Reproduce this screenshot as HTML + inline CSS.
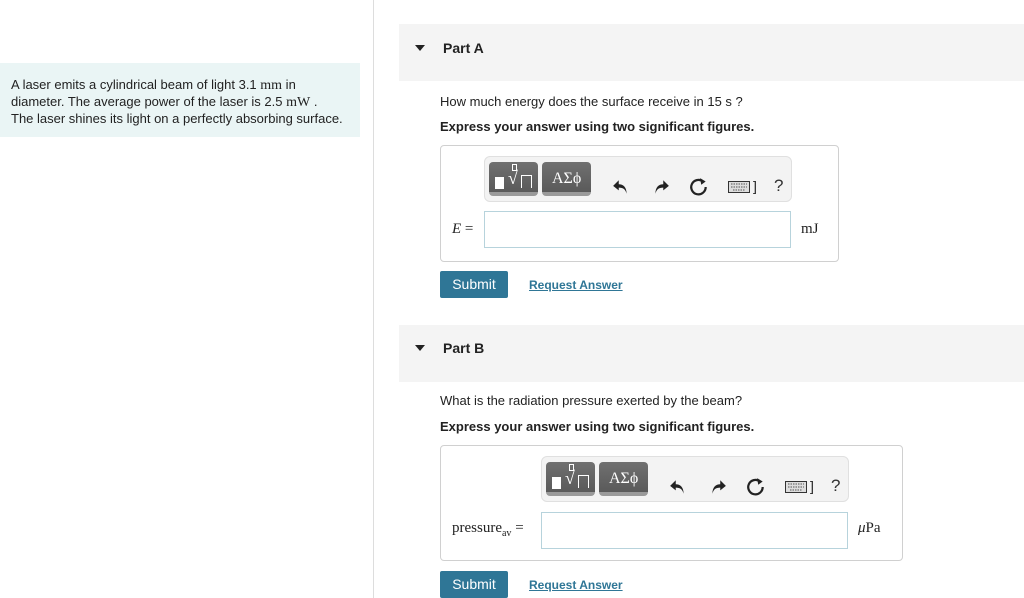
<!DOCTYPE html>
<html><head><meta charset="utf-8"><style>
*{margin:0;padding:0;box-sizing:border-box}
body{width:1024px;height:598px;overflow:hidden;background:#fff;font-family:"Liberation Sans",sans-serif;color:#222;position:relative}
.a{position:absolute}
.m{font-family:"Liberation Serif",serif}
.hdr{background:#f4f4f4;left:399px;width:625px;height:57px}
.tri{width:0;height:0;border-left:5px solid transparent;border-right:5px solid transparent;border-top:6px solid #222}
.pt{font-weight:bold;font-size:14px}
.q{font-size:13px}
.box{border:1px solid #d0d0d0;border-radius:4px}
.tb{background:#f3f3f3;border:1px solid #e0e0e0;border-radius:6px;width:308px;height:46px}
.btn{background:linear-gradient(#707070,#5a5a5a);border-radius:4px;height:34px;top:5px;border-bottom:4px solid #9a9a9a}
.inp{border:1px solid #b7d3dc;background:#fff;width:307px;height:37px}
.sub{background:#2f7696;color:#fff;font-size:14px;width:68px;height:27px;text-align:center;line-height:27px;border-radius:2px}
.req{color:#2f7696;font-size:12px;font-weight:bold;text-decoration:underline}
</style></head><body>
<div class="a" style="left:0;top:63px;width:360px;height:74px;background:#eaf5f5"></div>
<div class="a" style="left:11px;top:77px;font-size:13px;line-height:16px;color:#222;white-space:nowrap">A laser emits a cylindrical beam of light 3.1 <span class="m" style="font-size:14px">mm</span> in<br>diameter. The average power of the laser is 2.5 <span class="m" style="font-size:14px">mW</span> .<br>The laser shines its light on a perfectly absorbing surface.</div>
<div class="a" style="left:373px;top:0;width:1px;height:598px;background:#ddd"></div>

<div class="a hdr" style="top:24px"></div>
<div class="a tri" style="left:415px;top:45px"></div>
<div class="a pt" style="left:443px;top:40px">Part A</div>
<div class="a q" style="left:440px;top:94px">How much energy does the surface receive in 15 s ?</div>
<div class="a q" style="left:440px;top:119px;font-weight:bold">Express your answer using two significant figures.</div>
<div class="a box" style="left:440px;top:145px;width:399px;height:117px"></div>

<div class="a hdr" style="top:325px"></div>
<div class="a tri" style="left:415px;top:345px"></div>
<div class="a pt" style="left:443px;top:340px">Part B</div>
<div class="a q" style="left:440px;top:393px">What is the radiation pressure exerted by the beam?</div>
<div class="a q" style="left:440px;top:419px;font-weight:bold">Express your answer using two significant figures.</div>
<div class="a box" style="left:440px;top:445px;width:463px;height:116px"></div>

<!-- toolbar A -->
<div class="a tb" style="left:484px;top:156px">
 <div class="a btn" style="left:4px;width:49px"><div class="a" style="left:6px;top:15px;width:9px;height:12px;background:#fff"></div><div class="a" style="left:23px;top:2px;width:5px;height:7px;border:1px solid #fff"></div><div class="a m" style="left:19px;top:6px;color:#fff;font-size:18px">√</div><div class="a" style="left:32px;top:13px;width:11px;height:13px;border:1px solid #fff;border-bottom:none"></div></div>
 <div class="a btn" style="left:57px;width:49px"><div class="a m" style="left:10px;top:8px;color:#fff;font-size:16px">ΑΣϕ</div></div>
 <svg class="a" style="left:127px;top:21px" width="18" height="18" viewBox="0 0 16 16"><path d="M6 2 L1 7 L6 11 V8.5 C10 8.5 12 10 13 14 C13 8 10 5.5 6 5.5Z" fill="#222"/></svg>
 <svg class="a" style="left:167px;top:21px" width="18" height="18" viewBox="0 0 16 16"><path d="M10 2 L15 7 L10 11 V8.5 C6 8.5 4 10 3 14 C3 8 6 5.5 10 5.5Z" fill="#222"/></svg>
 <svg class="a" style="left:204px;top:20px" width="20" height="20" viewBox="0 0 18 18"><path d="M12.5 4 A6.5 6.5 0 1 0 15 9" fill="none" stroke="#222" stroke-width="2"/><path d="M10 1 L15 4 L11 7Z" fill="#222"/></svg>
 <svg class="a" style="left:243px;top:24px" width="22" height="12" viewBox="0 0 22 12"><rect x="0.5" y="0.5" width="21" height="11" fill="#ddd" stroke="#333"/><path d="M3 3h16M3 6h16M5 9h12" stroke="#555" stroke-dasharray="1.5 1"/></svg>
 <div class="a" style="left:268px;top:21px;font-size:14px">]</div>
 <div class="a" style="left:289px;top:19px;font-size:17px;color:#333">?</div>
</div>
<div class="a inp" style="left:484px;top:211px"></div>
<div class="a m" style="left:452px;top:221px;font-size:15px"><i>E</i> =</div>
<div class="a m" style="left:801px;top:221px;font-size:15px">mJ</div>
<div class="a sub" style="left:440px;top:271px">Submit</div>
<div class="a req" style="left:529px;top:278px">Request Answer</div>

<!-- toolbar B -->
<div class="a tb" style="left:541px;top:456px">
 <div class="a btn" style="left:4px;width:49px"><div class="a" style="left:6px;top:15px;width:9px;height:12px;background:#fff"></div><div class="a" style="left:23px;top:2px;width:5px;height:7px;border:1px solid #fff"></div><div class="a m" style="left:19px;top:6px;color:#fff;font-size:18px">√</div><div class="a" style="left:32px;top:13px;width:11px;height:13px;border:1px solid #fff;border-bottom:none"></div></div>
 <div class="a btn" style="left:57px;width:49px"><div class="a m" style="left:10px;top:8px;color:#fff;font-size:16px">ΑΣϕ</div></div>
 <svg class="a" style="left:127px;top:21px" width="18" height="18" viewBox="0 0 16 16"><path d="M6 2 L1 7 L6 11 V8.5 C10 8.5 12 10 13 14 C13 8 10 5.5 6 5.5Z" fill="#222"/></svg>
 <svg class="a" style="left:167px;top:21px" width="18" height="18" viewBox="0 0 16 16"><path d="M10 2 L15 7 L10 11 V8.5 C6 8.5 4 10 3 14 C3 8 6 5.5 10 5.5Z" fill="#222"/></svg>
 <svg class="a" style="left:204px;top:20px" width="20" height="20" viewBox="0 0 18 18"><path d="M12.5 4 A6.5 6.5 0 1 0 15 9" fill="none" stroke="#222" stroke-width="2"/><path d="M10 1 L15 4 L11 7Z" fill="#222"/></svg>
 <svg class="a" style="left:243px;top:24px" width="22" height="12" viewBox="0 0 22 12"><rect x="0.5" y="0.5" width="21" height="11" fill="#ddd" stroke="#333"/><path d="M3 3h16M3 6h16M5 9h12" stroke="#555" stroke-dasharray="1.5 1"/></svg>
 <div class="a" style="left:268px;top:21px;font-size:14px">]</div>
 <div class="a" style="left:289px;top:19px;font-size:17px;color:#333">?</div>
</div>
<div class="a inp" style="left:541px;top:512px"></div>
<div class="a m" style="left:452px;top:520px;font-size:15px">pressure<sub style="font-size:10px">av</sub> =</div>
<div class="a m" style="left:858px;top:520px;font-size:15px"><i>μ</i>Pa</div>
<div class="a sub" style="left:440px;top:571px">Submit</div>
<div class="a req" style="left:529px;top:578px">Request Answer</div>
</body></html>
